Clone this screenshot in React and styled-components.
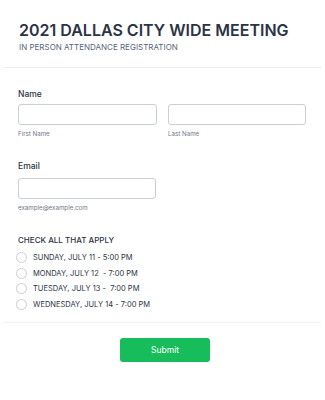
import React from 'react';
import styled, { createGlobalStyle } from 'styled-components';

const GlobalStyle = createGlobalStyle`
    body {
        margin: 0;
        background: #ffffff;
        font-family: Inter, "Liberation Sans", sans-serif;
        color: #2c3345;
    }
`;

const Page = styled.div`
    width: 325px;
    padding: 0 4px;
    box-sizing: border-box;
`;

const Header = styled.div`
    padding: 20px 15px 15px;
    border-bottom: 1px solid #eaebf2;
`;

const Title = styled.h1`
    margin: 0;
    font-size: 16px;
    line-height: 20px;
    font-weight: 600;
    color: #2c3345;
`;

const Subtitle = styled.div`
    margin-top: 2px;
    font-size: 8px;
    line-height: 10px;
    color: #57647e;
`;

const Fields = styled.div`
    padding: 20px 14px 12px;
    border-bottom: 1px solid #f1f2f6;
    display: flex;
    flex-direction: column;
    gap: 21px;
`;

const Field = styled.div`
    display: flex;
    flex-direction: column;
`;

const Label = styled.div`
    font-size: ${p => p.$small ? '8px' : '8.5px'};
    line-height: 12px;
    font-weight: 500;
    color: #2c3345;
    margin-bottom: ${p => p.$space || 5}px;
`;

const Row = styled.div`
    display: flex;
    gap: 11px;
`;

const Column = styled.div`
    display: flex;
    flex-direction: column;
    width: 139px;
`;

const Input = styled.div`
    height: 21px;
    box-sizing: border-box;
    border: 1px solid #c8ceda;
    border-radius: 3px;
    background: #fff;
    width: ${p => p.$width || '139px'};
`;

const Sublabel = styled.div`
    margin-top: 4px;
    font-size: 6.2px;
    line-height: 10px;
    color: #6f7689;
`;

const Options = styled.div`
    display: flex;
    flex-direction: column;
    gap: 4px;
`;

const Option = styled.div`
    display: flex;
    align-items: center;
    gap: 6px;
    height: 11.5px;
    font-size: 7.5px;
    color: #2c3345;
    margin-left: -2px;
    white-space: pre;
`;

const Circle = styled.span`
    width: 11px;
    height: 11px;
    border-radius: 50%;
    border: 1px solid #c8ceda;
    box-sizing: border-box;
    flex-shrink: 0;
`;

const Footer = styled.div`
    display: flex;
    justify-content: center;
    padding: 15px 0 15px 5px;
`;

const Submit = styled.button`
    width: 90px;
    height: 24px;
    padding: 0;
    border: none;
    border-radius: 3px;
    background: #18bd5b;
    color: #fff;
    font-family: inherit;
    font-size: 8.5px;
    font-weight: 400;
`;

const slots = [
    'SUNDAY, JULY 11 - 5:00 PM',
    'MONDAY, JULY 12  - 7:00 PM',
    'TUESDAY, JULY 13 -  7:00 PM',
    'WEDNESDAY, JULY 14 - 7:00 PM',
];

export default function App() {
    return (
        <Page>
            <GlobalStyle />
            <Header>
                <Title>2021 DALLAS CITY WIDE MEETING</Title>
                <Subtitle>IN PERSON ATTENDANCE REGISTRATION</Subtitle>
            </Header>
            <Fields>
                <Field>
                    <Label $space={4}>Name</Label>
                    <Row>
                        <Column>
                            <Input />
                            <Sublabel>First Name</Sublabel>
                        </Column>
                        <Column>
                            <Input $width="138px" />
                            <Sublabel>Last Name</Sublabel>
                        </Column>
                    </Row>
                </Field>
                <Field>
                    <Label $space={6}>Email</Label>
                    <Input $width="138px" />
                    <Sublabel>example@example.com</Sublabel>
                </Field>
                <Field>
                    <Label $small $space={6}>CHECK ALL THAT APPLY</Label>
                    <Options>
                        {slots.map(s => (
                            <Option key={s}>
                                <Circle />
                                {s}
                            </Option>
                        ))}
                    </Options>
                </Field>
            </Fields>
            <Footer>
                <Submit>Submit</Submit>
            </Footer>
        </Page>
    );
}
